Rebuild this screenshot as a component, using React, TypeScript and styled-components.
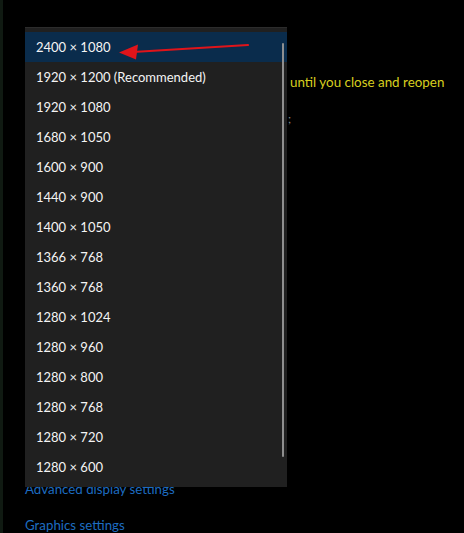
import styled, { createGlobalStyle } from "styled-components";

const resolutions = [
    "2400 × 1080",
    "1920 × 1200 (Recommended)",
    "1920 × 1080",
    "1680 × 1050",
    "1600 × 900",
    "1440 × 900",
    "1400 × 1050",
    "1366 × 768",
    "1360 × 768",
    "1280 × 1024",
    "1280 × 960",
    "1280 × 800",
    "1280 × 768",
    "1280 × 720",
    "1280 × 600",
];

const GlobalStyle = createGlobalStyle`
    html, body {
        margin: 0;
        padding: 0;
        background: #000;
    }
    body {
        font-family: Lato, "Open Sans", sans-serif;
    }
`;

const App = () => {
    return (
        <>
            <GlobalStyle />
            <Page>
                <EdgeLine />
                <Content>
                    <Notice>until you close and reopen</Notice>
                    <Stray>;</Stray>
                    <Links>
                        <Link>Advanced display settings</Link>
                        <Link>Graphics settings</Link>
                    </Links>
                </Content>

                <Dropdown>
                    {resolutions.map((r, i) => (
                        <Item key={r} selected={i === 0}>{r}</Item>
                    ))}
                    <Scrollbar />
                    <Arrow width="140" height="22" viewBox="0 0 140 22">
                        <line x1="131" y1="4" x2="16" y2="11" stroke="#e0141a" strokeWidth="2.2" strokeLinecap="round" />
                        <polygon points="2,11.5 21,3.5 19,18.5" fill="#e0141a" />
                    </Arrow>
                </Dropdown>
            </Page>
        </>
    );
}

const Page = styled.div`
    position: relative;
    width: 464px;
    height: 533px;
    background: #000;
    overflow: hidden;
    display: flex;
`;

const EdgeLine = styled.div`
    width: 3px;
    height: 100%;
    background: #101a12;
    flex-shrink: 0;
`;

const Content = styled.div`
    flex: 1;
    display: flex;
    flex-direction: column;
    padding: 72px 0 0 22px;
`;

const Notice = styled.div`
    margin-left: 265px;
    color: #d8cf1f;
    font-size: 13.4px;
    line-height: 20px;
`;

const Stray = styled.div`
    margin: 20px 0 0 263px;
    color: #8a8a8a;
    font-size: 12px;
    line-height: 14px;
`;

const Links = styled.div`
    margin-top: 353px;
    display: flex;
    flex-direction: column;
    gap: 15px;
`;

const Link = styled.div`
    color: #1d6cc0;
    font-size: 13.3px;
    line-height: 21px;
`;

const Dropdown = styled.div`
    position: absolute;
    left: 25px;
    top: 27px;
    width: 262px;
    box-sizing: border-box;
    padding: 4px 0 5px;
    background: #202020;
    border-top: 1px solid #2c2c2c;
    display: flex;
    flex-direction: column;
`;

const Item = styled.div<{ selected?: boolean }>`
    height: 30px;
    display: flex;
    align-items: center;
    padding-left: 11px;
    color: #f4f4f4;
    font-size: 13px;
    background: ${props => props.selected ? "#0a2c4c" : "transparent"};
`;

const Scrollbar = styled.div`
    position: absolute;
    right: 3px;
    top: 15px;
    width: 2px;
    height: 414px;
    background: #8f8f8f;
    border-radius: 1px;
`;

const Arrow = styled.svg`
    position: absolute;
    left: 92px;
    top: 13px;
`;

export default App;
